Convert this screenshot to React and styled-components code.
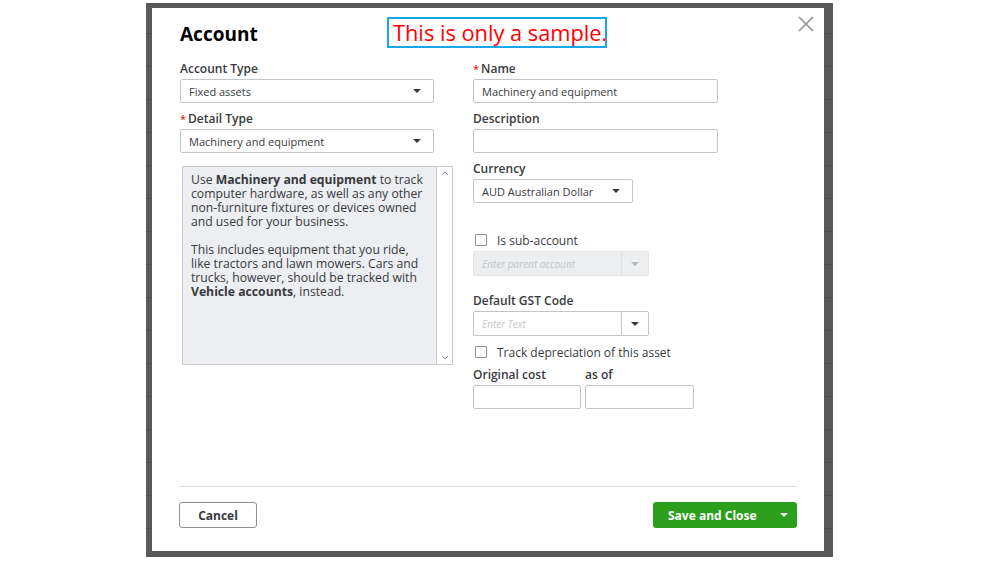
import React from 'react';
import styled, { createGlobalStyle } from 'styled-components';

const GlobalStyle = createGlobalStyle`
  html, body {
    margin: 0;
    padding: 0;
    background: #ffffff;
  }
  body {
    font-family: "Open Sans", "Liberation Sans", sans-serif;
    color: #393a3d;
  }
`;

const Page = styled.div`
  width: 999px;
  height: 562px;
  padding: 3px 0 0 146px;
  box-sizing: border-box;
`;

const Backdrop = styled.div`
  width: 687px;
  height: 554px;
  box-sizing: border-box;
  padding: 5px 9px 6px 6px;
  background-color: #595959;
  background-image: repeating-linear-gradient(
    to bottom,
    transparent 0 30px,
    #4f4f4f 30px 31px,
    transparent 31px 33px
  );
`;

const Modal = styled.div`
  position: relative;
  height: 100%;
  box-sizing: border-box;
  padding: 0 27px;
  background: #ffffff;
  display: flex;
  flex-direction: column;
`;

const Header = styled.div`
  padding: 14px 0 16px 1px;
`;

const Title = styled.h1`
  margin: 0;
  font-size: 19px;
  line-height: 24px;
  font-weight: 700;
  color: #000000;
`;

const Watermark = styled.div`
  position: absolute;
  left: 235px;
  top: 9px;
  width: 220px;
  height: 31px;
  box-sizing: border-box;
  border: 2px solid #19a8e6;
  padding-left: 4px;
  font-family: "Open Sans", "Noto Sans", sans-serif;
  font-size: 21.8px;
  line-height: 27px;
  color: #ff0000;
  white-space: nowrap;
`;

const CloseButton = styled.button`
  position: absolute;
  top: 7px;
  right: 9px;
  width: 18px;
  height: 18px;
  padding: 0;
  border: none;
  background: transparent;
  display: flex;
  align-items: center;
  justify-content: center;
`;

const Form = styled.div`
  display: grid;
  grid-template-columns: 273px 245px;
  column-gap: 20px;
  align-items: start;
  margin-left: 1px;
`;

const Column = styled.div`
  display: flex;
  flex-direction: column;
`;

const Field = styled.div`
  display: flex;
  flex-direction: column;
  margin-top: ${p => p.mt || 0}px;
  width: ${p => (p.w ? `${p.w}px` : 'auto')};
`;

const Label = styled.label`
  font-size: 12px;
  font-weight: 600;
  line-height: 14px;
  margin-bottom: 3px;
  color: #393a3d;
  white-space: nowrap;
`;

const Req = styled.span`
  color: #e0301e;
  font-size: 11px;
  margin-right: 2px;
`;

const Select = styled.div`
  width: ${p => p.w}px;
  height: 24px;
  box-sizing: border-box;
  border: 1px solid #c2c5ca;
  border-radius: 2px;
  padding: 0 12px 0 8px;
  display: flex;
  align-items: center;
  justify-content: space-between;
  font-size: 11px;
  color: #393a3d;
  background: #fff;
`;

const Input = styled.div`
  width: ${p => p.w}px;
  height: 24px;
  box-sizing: border-box;
  border: 1px solid #c2c5ca;
  border-radius: 2px;
  padding: 0 8px;
  display: flex;
  align-items: center;
  font-size: 11px;
  color: #393a3d;
  background: #fff;
`;

const Caret = styled.span`
  width: 0;
  height: 0;
  border-left: 4px solid transparent;
  border-right: 4px solid transparent;
  border-top: 4px solid ${p => p.color || '#393a3d'};
`;

const Combo = styled.div`
  width: 176px;
  height: 25px;
  box-sizing: border-box;
  border: 1px solid ${p => (p.disabled ? '#e3e4e6' : '#c2c5ca')};
  border-radius: 2px;
  background: ${p => (p.disabled ? '#eceef0' : '#ffffff')};
  display: flex;
  margin-top: ${p => p.mt || 0}px;
`;

const ComboText = styled.div`
  flex: 1;
  display: flex;
  align-items: center;
  padding-left: 8px;
  font-size: 10px;
  font-style: italic;
  color: #c4c6ca;
`;

const ComboButton = styled.div`
  width: 26px;
  border-left: 1px solid ${p => (p.disabled ? '#dfe0e3' : '#c2c5ca')};
  display: flex;
  align-items: center;
  justify-content: center;
`;

const CheckRow = styled.label`
  display: flex;
  align-items: center;
  height: 14px;
  margin-top: ${p => p.mt || 0}px;
  padding-left: 2px;
  font-size: 12px;
  color: #393a3d;
  white-space: nowrap;
`;

const Box = styled.span`
  width: 12px;
  height: 12px;
  box-sizing: border-box;
  border: 1px solid #8d9096;
  border-radius: 1px;
  background: #fff;
  margin-right: 10px;
`;

const CostRow = styled.div`
  display: flex;
  gap: 4px;
  margin-top: 9px;
`;

const DescBox = styled.div`
  margin-top: 13px;
  margin-left: 2px;
  width: 271px;
  height: 199px;
  box-sizing: border-box;
  border: 1px solid #c8cacd;
  background: #eceef1;
  display: flex;
`;

const DescText = styled.div`
  flex: 1;
  padding: 6px 0 0 8px;
  font-size: 12.2px;
  line-height: 14px;
  color: #393a3d;
  white-space: nowrap;

  p {
    margin: 0 0 14px;
  }
  b {
    font-weight: 700;
  }
`;

const Scrollbar = styled.div`
  width: 15px;
  background: #ffffff;
  border-left: 1px solid #c8cacd;
  display: flex;
  flex-direction: column;
  justify-content: space-between;
  align-items: center;
  padding: 4px 0;
`;

const Footer = styled.div`
  margin-top: auto;
  border-top: 1px solid #dcdddf;
  padding: 15px 0 23px;
  display: flex;
  justify-content: space-between;
`;

const CancelButton = styled.button`
  width: 78px;
  height: 26px;
  border: 1px solid #8d9096;
  border-radius: 3px;
  background: #fff;
  font-family: inherit;
  font-size: 12px;
  font-weight: 700;
  color: #393a3d;
`;

const SaveButton = styled.button`
  width: 144px;
  height: 26px;
  border: none;
  border-radius: 3px;
  background: #2ca01c;
  padding: 0 9px 0 15px;
  display: flex;
  align-items: center;
  justify-content: space-between;
  font-family: inherit;
  font-size: 12px;
  font-weight: 700;
  color: #ffffff;
`;

const Chevron = ({ up }) => (
  <svg width="8" height="5" viewBox="0 0 8 5">
    <path
      d={up ? 'M1 4 L4 1 L7 4' : 'M1 1 L4 4 L7 1'}
      fill="none"
      stroke="#8d9096"
      strokeWidth="1"
    />
  </svg>
);

export default function App() {
  return (
    <Page>
      <GlobalStyle />
      <Backdrop>
        <Modal>
          <Watermark>This is only a sample.</Watermark>
          <CloseButton aria-label="Close">
            <svg width="16" height="16" viewBox="0 0 16 16">
              <path d="M1 1 L15 15 M15 1 L1 15" stroke="#8d9096" strokeWidth="1.6" />
            </svg>
          </CloseButton>

          <Header>
            <Title>Account</Title>
          </Header>

          <Form>
            <Column>
              <Field>
                <Label>Account Type</Label>
                <Select w={254}>
                  Fixed assets
                  <Caret />
                </Select>
              </Field>
              <Field mt={9}>
                <Label><Req>*</Req>Detail Type</Label>
                <Select w={254}>
                  Machinery and equipment
                  <Caret />
                </Select>
              </Field>
              <DescBox>
                <DescText>
                  <p>
                    Use <b>Machinery and equipment</b> to track<br />
                    computer hardware, as well as any other<br />
                    non-furniture fixtures or devices owned<br />
                    and used for your business.
                  </p>
                  <p>
                    This includes equipment that you ride,<br />
                    like tractors and lawn mowers. Cars and<br />
                    trucks, however, should be tracked with<br />
                    <b>Vehicle accounts</b>, instead.
                  </p>
                </DescText>
                <Scrollbar>
                  <Chevron up />
                  <Chevron />
                </Scrollbar>
              </DescBox>
            </Column>

            <Column>
              <Field>
                <Label><Req>*</Req>Name</Label>
                <Input w={245}>Machinery and equipment</Input>
              </Field>
              <Field mt={9}>
                <Label>Description</Label>
                <Input w={245} />
              </Field>
              <Field mt={9}>
                <Label>Currency</Label>
                <Select w={160}>
                  AUD Australian Dollar
                  <Caret />
                </Select>
              </Field>

              <CheckRow mt={30}>
                <Box />
                Is sub-account
              </CheckRow>
              <Combo disabled mt={4}>
                <ComboText>Enter parent account</ComboText>
                <ComboButton disabled>
                  <Caret color="#b5b8bd" />
                </ComboButton>
              </Combo>

              <Field mt={18}>
                <Label>Default GST Code</Label>
                <Combo>
                  <ComboText>Enter Text</ComboText>
                  <ComboButton>
                    <Caret />
                  </ComboButton>
                </Combo>
              </Field>

              <CheckRow mt={9}>
                <Box />
                Track depreciation of this asset
              </CheckRow>

              <CostRow>
                <Field w={108}>
                  <Label>Original cost</Label>
                  <Input w={108} />
                </Field>
                <Field w={109}>
                  <Label>as of</Label>
                  <Input w={109} />
                </Field>
              </CostRow>
            </Column>
          </Form>

          <Footer>
            <CancelButton>Cancel</CancelButton>
            <SaveButton>
              Save and Close
              <Caret color="#ffffff" />
            </SaveButton>
          </Footer>
        </Modal>
      </Backdrop>
    </Page>
  );
}
